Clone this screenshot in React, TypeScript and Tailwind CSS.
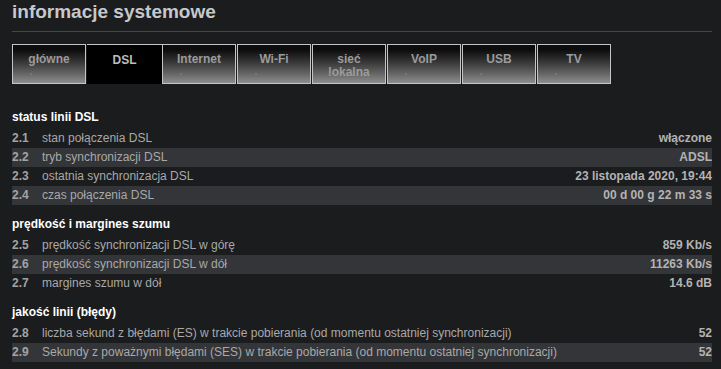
import React from "react";

type Row = { no: string; label: string; value: string };

const tabs = [
  { id: "glowne", label: "główne" },
  { id: "dsl", label: "DSL", active: true },
  { id: "internet", label: "Internet" },
  { id: "wifi", label: "Wi-Fi" },
  { id: "lan", label: "sieć lokalna", twoLines: true },
  { id: "voip", label: "VoIP" },
  { id: "usb", label: "USB" },
  { id: "tv", label: "TV" },
];

const sections: { title: string; rows: Row[] }[] = [
  {
    title: "status linii DSL",
    rows: [
      { no: "2.1", label: "stan połączenia DSL", value: "włączone" },
      { no: "2.2", label: "tryb synchronizacji DSL", value: "ADSL" },
      { no: "2.3", label: "ostatnia synchronizacja DSL", value: "23 listopada 2020, 19:44" },
      { no: "2.4", label: "czas połączenia DSL", value: "00 d 00 g 22 m 33 s" },
    ],
  },
  {
    title: "prędkość i margines szumu",
    rows: [
      { no: "2.5", label: "prędkość synchronizacji DSL w górę", value: "859 Kb/s" },
      { no: "2.6", label: "prędkość synchronizacji DSL w dół", value: "11263 Kb/s" },
      { no: "2.7", label: "margines szumu w dół", value: "14.6 dB" },
    ],
  },
  {
    title: "jakość linii (błędy)",
    rows: [
      {
        no: "2.8",
        label: "liczba sekund z błędami (ES) w trakcie pobierania (od momentu ostatniej synchronizacji)",
        value: "52",
      },
      {
        no: "2.9",
        label: "Sekundy z poważnymi błędami (SES) w trakcie pobierania (od momentu ostatniej synchronizacji)",
        value: "52",
      },
    ],
  },
];

const Tab = ({ label, active }: { label: string; active?: boolean }) => {
  if (active) {
    return (
      <div className="w-[75px] h-[40px] border-t border-[#c4c4c4] bg-black text-center pt-[9px] leading-[13px] text-[#bdbdbd] font-bold">
        {label}
      </div>
    );
  }
  const words = label.split(" ");
  return (
    <div className="relative w-[74px] h-[40px] mr-[1px] border border-[#c4c4c4] bg-linear-to-b from-[#0c0c0c] from-[12%] to-[#8e8e8e] text-center pt-[8px] leading-[13px] text-[#9b9b9b] font-bold">
      {words.map((w) => (
        <div key={w}>{w}</div>
      ))}
      <span className="absolute left-[17px] top-[28px] w-[2px] h-[2px] bg-[#767676]" />
    </div>
  );
};

export default function App() {
  return (
    <div className="min-h-screen bg-[#1b1c1e] pl-3 pr-[9px] text-[12px] font-['Liberation_Sans',Arial,sans-serif]">
      <h1 className="h-[24px] leading-[24px] text-[19px] font-bold text-[#c6c8cc]">
        informacje systemowe
      </h1>
      <div className="mt-[7px] border-t border-[#454648]" />

      <div className="mt-3 flex">
        {tabs.map((t) => (
          <Tab key={t.id} label={t.label} active={t.active} />
        ))}
      </div>

      <div className="pt-[14px]">
        {sections.map((s) => (
          <div key={s.title} className="mt-[10px]">
            <div className="h-[19px] leading-[19px] mb-[2px] font-bold text-white">
              {s.title}
            </div>
            {s.rows.map((r, i) => (
              <div
                key={r.no}
                className={`flex h-[19px] items-center leading-[19px] ${
                  i % 2 === 1 ? "bg-[#333538]" : ""
                }`}
              >
                <span className="w-[30px] font-bold text-[#a3a3a3]">{r.no}</span>
                <span className="flex-1 text-[#a9a9a9]">{r.label}</span>
                <span className="font-bold text-[#b3b3b3]">{r.value}</span>
              </div>
            ))}
          </div>
        ))}
      </div>
    </div>
  );
}
